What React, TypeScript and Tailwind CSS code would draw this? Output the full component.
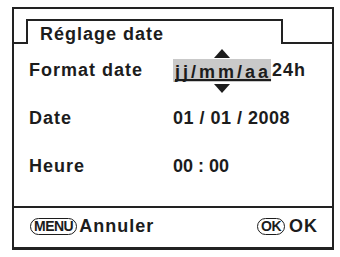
import React from "react";

const Up: React.FC = () => (
  <svg width="16" height="9" viewBox="0 0 16 9" className="absolute left-1/2 -translate-x-1/2 top-[-10px]">
    <polygon points="8,0 16,9 0,9" fill="#1c1c1c" />
  </svg>
);

const Down: React.FC = () => (
  <svg width="16" height="9" viewBox="0 0 16 9" className="absolute left-1/2 -translate-x-1/2 bottom-[-11px]">
    <polygon points="0,0 16,0 8,9" fill="#1c1c1c" />
  </svg>
);

const Pill: React.FC<{ label: string }> = ({ label }) => (
  <span className="inline-flex items-center justify-center h-[17px] px-[3px] rounded-full border-[1.5px] border-[#1c1c1c] text-[14px] leading-none tracking-[-0.5px]">
    {label}
  </span>
);

export default function App() {
  return (
    <div
      className="w-[340px] h-[257px] bg-white pt-[7px] pl-[12px] text-[#1c1c1c] font-bold"
      style={{ fontFamily: '"Liberation Sans", Arial, sans-serif' }}
    >
      <div className="w-[322px] h-[243px] border-2 border-b-[3px] border-[#222] flex flex-col">
        {/* Title tab */}
        <div className="flex h-[35px]">
          <div className="w-[12px] border-b-2 border-[#222]" />
          <div className="mt-[10px] w-[257px] border-t-2 border-x-2 border-[#222] pt-[3px] pl-[12px] text-[18px] leading-[20px] tracking-[1px]">
            Réglage date
          </div>
          <div className="flex-1 border-b-2 border-[#222]" />
        </div>

        {/* Rows */}
        <div className="flex-1 pt-[2px] pl-[15px] text-[18px] leading-[20px]">
          <div className="flex items-center h-[48px]">
            <span className="w-[144px] tracking-[1px]">Format date</span>
            <span className="relative inline-block bg-[#c9c9c9] h-[23px] pt-[3px] pl-[2px]">
              <Up />
              <span className="underline decoration-2 underline-offset-[1px] [text-decoration-skip-ink:none] tracking-[3px]">
                jj/mm/aa
              </span>
              <Down />
            </span>
            <span className="ml-[1px] tracking-[1px]">24h</span>
          </div>
          <div className="flex items-center h-[48px]">
            <span className="w-[144px] tracking-[1px]">Date</span>
            <span className="tracking-[0.5px]">01 / 01 / 2008</span>
          </div>
          <div className="flex items-center h-[48px]">
            <span className="w-[144px] tracking-[1px]">Heure</span>
            <span>00 : 00</span>
          </div>
        </div>

        {/* Footer */}
        <div className="h-[41px] border-t-2 border-[#222] flex items-center justify-between pl-[16px] pr-[14px] pb-[3px] text-[18px] leading-[20px] tracking-[1px]">
          <div className="flex items-center">
            <Pill label="MENU" />
            <span className="ml-[2px]">Annuler</span>
          </div>
          <div className="flex items-center">
            <Pill label="OK" />
            <span className="ml-[4px]">OK</span>
          </div>
        </div>
      </div>
    </div>
  );
}
